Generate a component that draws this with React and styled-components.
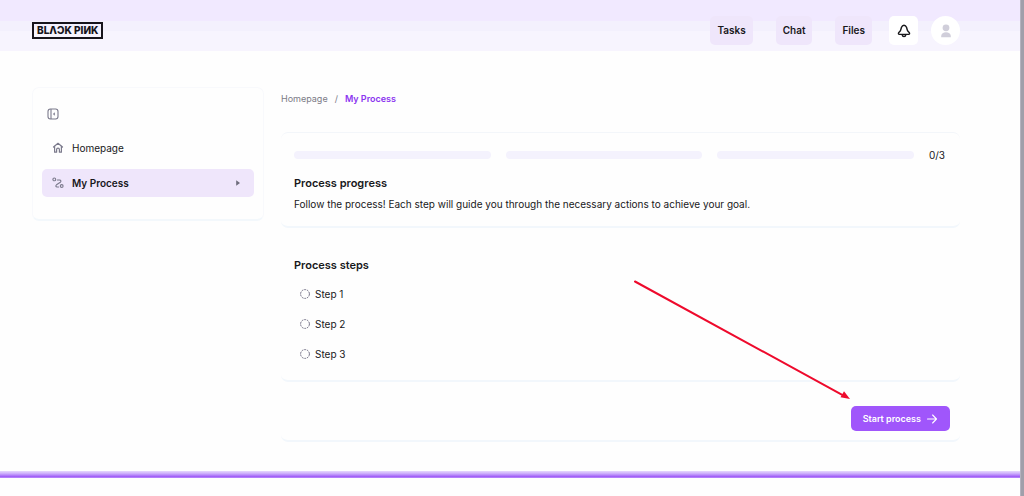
import React, { useState } from "react";
import styled, { createGlobalStyle } from "styled-components";

const GlobalStyle = createGlobalStyle`
  * {
    box-sizing: border-box;
  }

  body {
    margin: 0;
    background: #fefefe;
    color: #18181b;
    font-family: Inter, "Liberation Sans", sans-serif;
    font-size: 10px;
    line-height: 14px;
  }

  button {
    font-family: inherit;
    cursor: pointer;
  }
`;

const Shell = styled.div`
  display: flex;
  min-height: 100vh;
`;

const Page = styled.div`
  flex: 1;
  min-width: 0;
`;

const ScrollTrack = styled.div`
  width: 4px;
  background: #a09faa;
  border-left: 1px solid #b4b3bf;
`;

const Header = styled.header`
  display: flex;
  align-items: center;
  justify-content: space-between;
  padding: 16px 60px 6px 32px;
  background: linear-gradient(
    #f1e9ff 21px,
    #f3f0fd 21px,
    #f3f0fd 31px,
    #f7f4fe 31px
  );
`;

const Logo = styled.a`
  padding: 0 3px;
  border: 2px solid #17141c;
  color: #17141c;
  font-size: 10px;
  font-weight: 800;
  line-height: 13px;
  text-decoration: none;
`;

const Nav = styled.nav`
  display: flex;
  align-items: center;
`;

const NavLinks = styled.div`
  display: flex;
  gap: 23px;
  margin-right: 17px;
`;

const NavLink = styled.a`
  padding: 0 7px;
  border-radius: 5px;
  background: #efe6fb;
  color: #18181b;
  font-weight: 600;
  line-height: 29px;
  text-decoration: none;
`;

const RoundButton = styled.button`
  display: flex;
  align-items: center;
  justify-content: center;
  width: 29px;
  height: 29px;
  margin-left: ${props => (props.$circle ? "13px" : "0")};
  padding: 0;
  border: none;
  border-radius: ${props => (props.$circle ? "50%" : "5px")};
  background: #fff;
`;

const Body = styled.div`
  display: flex;
  align-items: flex-start;
  gap: 17px;
  padding: 36px 60px 29px 32px;
`;

const Sidebar = styled.aside`
  flex: 0 0 232px;
  padding: 19px 9px 22px;
  border: 1px solid #f8f9fc;
  border-bottom: 2px solid #f3f8fc;
  border-radius: 7px;
`;

const Toggle = styled.button`
  display: block;
  height: 14px;
  margin: 0 0 13px 5px;
  padding: 0;
  border: none;
  background: none;
`;

const Menu = styled.ul`
  display: flex;
  flex-direction: column;
  gap: 7px;
  margin: 0;
  padding: 0;
  list-style: none;
`;

const MenuLink = styled.a`
  display: flex;
  align-items: center;
  gap: 8px;
  height: 28px;
  padding: 0 12px 0 10px;
  border-radius: 5px;
  background: ${props => (props.$active ? "#efe6fb" : "none")};
  color: #18181b;
  font-weight: ${props => (props.$active ? 600 : 400)};
  text-decoration: none;
`;

const MenuText = styled.span`
  flex: 1;
`;

const Main = styled.main`
  flex: 1;
  min-width: 0;
  padding-top: 5px;
`;

const Breadcrumb = styled.nav`
  display: flex;
  gap: 7px;
  margin-bottom: 26px;
  color: #7c7b86;
  font-size: 9px;
`;

const Crumb = styled.a`
  color: ${props => (props.$current ? "#8b35f0" : "inherit")};
  font-weight: ${props => (props.$current ? 600 : 400)};
  text-decoration: none;
`;

const Card = styled.section`
  margin-bottom: 14px;
  padding: 15px 15px 15px 13px;
  border-top: 1px solid ${props => (props.$line ? "#f3f6fa" : "transparent")};
  border-bottom: 2px solid #f2f7fc;
  border-radius: 7px;
`;

const Progress = styled.div`
  display: flex;
  align-items: center;
  gap: 15px;
  margin-bottom: 14px;
`;

const Segment = styled.div`
  flex: 1;
  height: 8px;
  border-radius: 4px;
  background: #f4f2fd;
`;

const Title = styled.h2`
  margin: 0 0 7px;
  font-size: 11px;
  font-weight: 600;
  line-height: 14px;
`;

const Text = styled.p`
  margin: 0;
`;

const Steps = styled.ol`
  display: flex;
  flex-direction: column;
  gap: 16px;
  margin: 15px 0 4px;
  padding: 0 6px;
  list-style: none;
`;

const Step = styled.li`
  display: flex;
  align-items: center;
  gap: 5px;
`;

const Actions = styled(Card)`
  display: flex;
  justify-content: flex-end;
  margin-bottom: 0;
  padding: 9px 10px;
`;

const ButtonWrap = styled.div`
  position: relative;
`;

const StartButton = styled.button`
  display: flex;
  align-items: center;
  gap: 5px;
  height: 25px;
  padding: 0 12px;
  border: none;
  border-radius: 5px;
  background: #a056fb;
  color: #fff;
  font-size: 9px;
  font-weight: 600;
`;

const Pointer = styled.svg`
  position: absolute;
  right: 100%;
  bottom: 100%;
  pointer-events: none;
`;

const FooterBar = styled.div`
  height: 7px;
  background: linear-gradient(#e6d8fd, #c9a8fb 40%, #9b55f7 85%, #c9a4fb);
`;

const BellIcon = () => (
  <svg width="14" height="14" viewBox="0 0 14 14" fill="none" stroke="#18181b" strokeWidth="1.4" strokeLinejoin="round" strokeLinecap="round">
    <path d="M7 1.2C5.7 1.2 5 2 4.5 3.3L3.7 6C3.4 7.1 2.6 7.8 1.8 8.6C1.1 9.3 1.4 10.4 2.4 10.4H11.6C12.6 10.4 12.9 9.3 12.2 8.6C11.4 7.8 10.6 7.1 10.3 6L9.5 3.3C9 2 8.3 1.2 7 1.2Z" />
    <path d="M5.2 10.8C5.5 13.1 8.5 13.1 8.8 10.8" />
  </svg>
);

const UserIcon = () => (
  <svg width="12" height="14" viewBox="0 0 12 14" fill="#d0ceda">
    <circle cx="6" cy="3.8" r="3.4" />
    <path d="M1.2 13.2V11.9C1.2 9.6 3.4 8.2 6 8.2S10.8 9.6 10.8 11.9V13.2Z" />
  </svg>
);

const CollapseIcon = () => (
  <svg width="12" height="12" viewBox="0 0 12 12" fill="none" stroke="#7b7a8c" strokeWidth="1.1">
    <rect x="1" y="1" width="10" height="10" rx="2.4" />
    <path d="M4 1V11" />
    <path d="M7.8 4.2V7.8L5.9 6Z" fill="#7b7a8c" stroke="none" />
  </svg>
);

const HomeIcon = () => (
  <svg width="12" height="12" viewBox="0 0 12 12" fill="none" stroke="#7b7a8c" strokeWidth="1.2" strokeLinejoin="round" strokeLinecap="round">
    <path d="M1.5 5L6 1.3L10.5 5" />
    <path d="M2.6 4.4V10.2H4.6V7.4C4.6 5.7 7.4 5.7 7.4 7.4V10.2H9.4V4.4" />
  </svg>
);

const RouteIcon = () => (
  <svg width="12" height="12" viewBox="0 0 12 12" fill="none" stroke="#7b7a8c" strokeWidth="1.1" strokeLinejoin="round" strokeLinecap="round">
    <circle cx="2.3" cy="2.4" r="1.4" />
    <circle cx="9.7" cy="9" r="1.4" />
    <path d="M5.4 3H7.6C9.1 3 9.3 4.4 8.3 5.2L4.5 7.8C3.3 8.8 3.8 10 5.1 10H6.6" />
  </svg>
);

const CaretIcon = () => (
  <svg width="8" height="8" viewBox="0 0 8 8" fill="#6f6d7c">
    <path d="M2.2 1.2L6 4L2.2 6.8Z" />
  </svg>
);

const StepIcon = () => (
  <svg width="10" height="10" viewBox="0 0 10 10" fill="none" stroke="#6d6b80" strokeWidth="1">
    <circle cx="5" cy="5" r="4.4" strokeDasharray="1.9 0.86" />
  </svg>
);

const ArrowIcon = () => (
  <svg width="12" height="12" viewBox="0 0 12 12" fill="none" stroke="#fff" strokeWidth="1.1" strokeLinecap="round" strokeLinejoin="round">
    <path d="M1.5 6H10.5M6.6 2L10.5 6L6.6 10" />
  </svg>
);

const navItems = ["Tasks", "Chat", "Files"];
const steps = ["Step 1", "Step 2", "Step 3"];

const App = () => {
  const [open, setOpen] = useState(true);
  return (
    <>
      <GlobalStyle />
      <Shell>
        <Page>
          <Header>
            <Logo href="/">BLΛƆK PIИK</Logo>
            <Nav>
              <NavLinks>
                {navItems.map(item => (
                  <NavLink key={item} href="/">
                    {item}
                  </NavLink>
                ))}
              </NavLinks>
              <RoundButton aria-label="Notifications">
                <BellIcon />
              </RoundButton>
              <RoundButton $circle aria-label="Account">
                <UserIcon />
              </RoundButton>
            </Nav>
          </Header>
          <Body>
            <Sidebar>
              <Toggle aria-label="Toggle menu" onClick={() => setOpen(!open)}>
                <CollapseIcon />
              </Toggle>
              {open && (
                <Menu>
                  <li>
                    <MenuLink href="/">
                      <HomeIcon />
                      <MenuText>Homepage</MenuText>
                    </MenuLink>
                  </li>
                  <li>
                    <MenuLink href="/" $active>
                      <RouteIcon />
                      <MenuText>My Process</MenuText>
                      <CaretIcon />
                    </MenuLink>
                  </li>
                </Menu>
              )}
            </Sidebar>
            <Main>
              <Breadcrumb aria-label="Breadcrumb">
                <Crumb href="/">Homepage</Crumb>
                <span>/</span>
                <Crumb href="/" $current>
                  My Process
                </Crumb>
              </Breadcrumb>
              <Card $line>
                <Progress>
                  {steps.map(step => (
                    <Segment key={step} />
                  ))}
                  <span>0/3</span>
                </Progress>
                <Title>Process progress</Title>
                <Text>
                  Follow the process! Each step will guide you through the
                  necessary actions to achieve your goal.
                </Text>
              </Card>
              <Card>
                <Title>Process steps</Title>
                <Steps>
                  {steps.map(step => (
                    <Step key={step}>
                      <StepIcon />
                      {step}
                    </Step>
                  ))}
                </Steps>
              </Card>
              <Actions>
                <ButtonWrap>
                  <StartButton>
                    Start process
                    <ArrowIcon />
                  </StartButton>
                  <Pointer width="218" height="126" viewBox="0 0 218 126">
                    <path d="M2 1.5L211 115.8" stroke="#ee0a2c" strokeWidth="2" strokeLinecap="round" />
                    <path d="M217 119L207.5 117.2L211 111.2Z" fill="#ee0a2c" />
                  </Pointer>
                </ButtonWrap>
              </Actions>
            </Main>
          </Body>
          <FooterBar />
        </Page>
        <ScrollTrack />
      </Shell>
    </>
  );
};

export default App;
